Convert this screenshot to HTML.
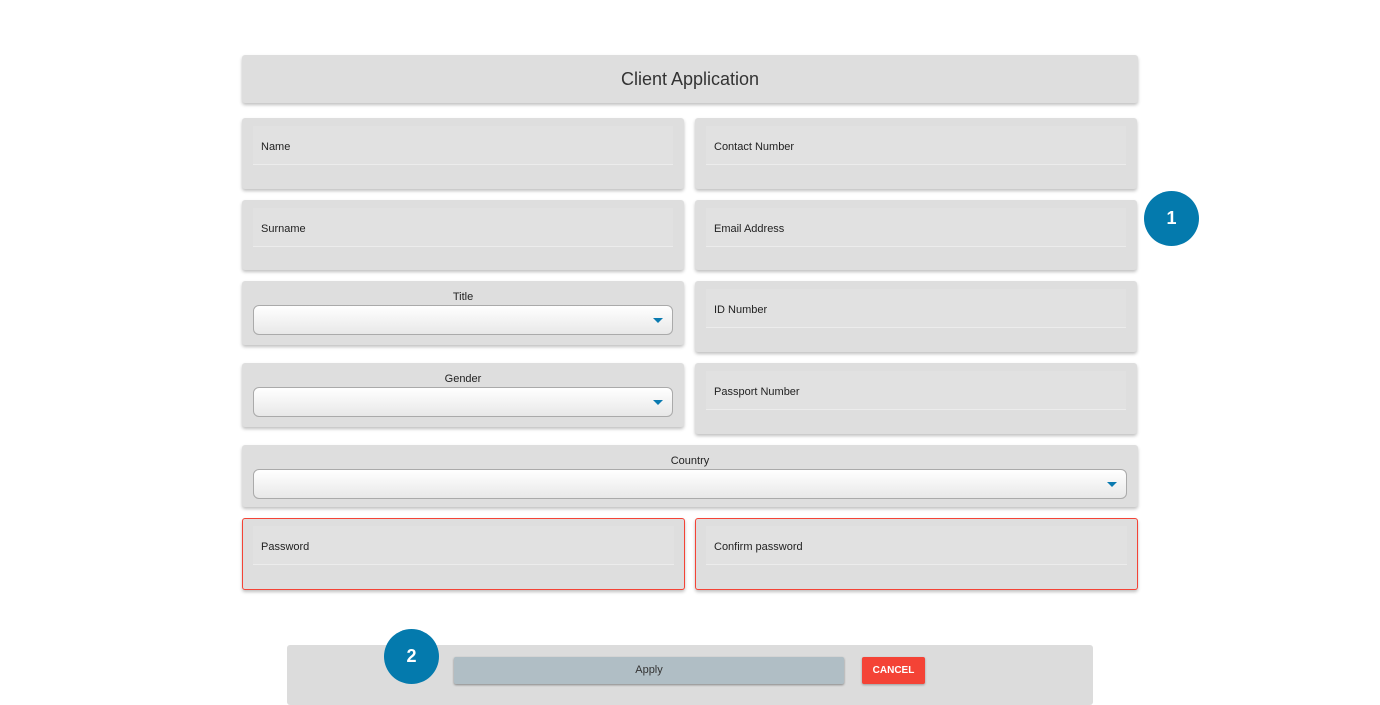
<!DOCTYPE html>
<html><head><style>
*{box-sizing:border-box;margin:0;padding:0}
body{width:1380px;height:693px;background:#fff;font-family:"Liberation Sans",Arial,sans-serif;position:relative;overflow:hidden}
.c{position:absolute;background:#dedede;border-radius:3px;box-shadow:0 2px 3px rgba(0,0,0,.25)}
.hd{left:242px;top:55px;width:896px;height:48px;text-align:center;line-height:48px;font-size:18px;color:#333}
.f{position:absolute;left:11px;right:11px;top:8px;height:39px;background:#e1e1e1;border-bottom:1px solid #ececec;font-size:11px;color:#222;padding:15px 0 0 8px}
.red{border:1px solid #f44336}
.lab{position:absolute;left:0;right:0;top:10px;text-align:center;font-size:11px;color:#222}
.sel{position:absolute;left:11px;right:11px;top:24px;height:30px;border:1px solid #aaa;border-radius:6px;background:linear-gradient(#fff,#e8e8e8)}
.sel:after{content:"";position:absolute;right:9px;top:12px;border-left:5px solid transparent;border-right:5px solid transparent;border-top:5px solid #0a7ab0}
.b{position:absolute;width:55px;height:55px;border-radius:50%;background:#047aad;color:#fff;font-weight:bold;font-size:18px;text-align:center;line-height:55px}
</style></head><body>
<div class="c hd">Client Application</div>
<div class="c" style="left:242px;top:118px;width:442px;height:71px"><div class="f">Name</div></div>
<div class="c" style="left:695px;top:118px;width:442px;height:71px"><div class="f">Contact Number</div></div>
<div class="c" style="left:242px;top:200px;width:442px;height:70px"><div class="f">Surname</div></div>
<div class="c" style="left:695px;top:200px;width:442px;height:70px"><div class="f">Email Address</div></div>
<div class="c" style="left:242px;top:281px;width:442px;height:64px"><div class="lab">Title</div><div class="sel"></div></div>
<div class="c" style="left:695px;top:281px;width:442px;height:71px"><div class="f">ID Number</div></div>
<div class="c" style="left:242px;top:363px;width:442px;height:64px"><div class="lab">Gender</div><div class="sel"></div></div>
<div class="c" style="left:695px;top:363px;width:442px;height:71px"><div class="f">Passport Number</div></div>
<div class="c" style="left:242px;top:445px;width:896px;height:62px"><div class="lab">Country</div><div class="sel"></div></div>
<div class="c red" style="left:242px;top:518px;width:443px;height:72px"><div class="f" style="left:10px;right:10px;top:7px">Password</div></div>
<div class="c red" style="left:695px;top:518px;width:443px;height:72px"><div class="f" style="left:10px;right:10px;top:7px">Confirm password</div></div>
<div class="b" style="left:1144px;top:191px">1</div>
<div style="position:absolute;left:287px;top:645px;width:806px;height:60px;background:#dcdcdc;border-radius:3px"></div>
<div style="position:absolute;left:454px;top:657px;width:390px;height:27px;background:#b0bec5;border-radius:2px;box-shadow:0 1px 2px rgba(0,0,0,.4);text-align:center;line-height:27px;font-size:11px;color:#333">Apply</div>
<div style="position:absolute;left:862px;top:657px;width:63px;height:27px;background:#f44336;border-radius:2px;box-shadow:0 1px 2px rgba(0,0,0,.3);text-align:center;line-height:27px;font-size:10px;font-weight:bold;color:#fff">CANCEL</div>
<div class="b" style="left:384px;top:629px">2</div>
</body></html>
